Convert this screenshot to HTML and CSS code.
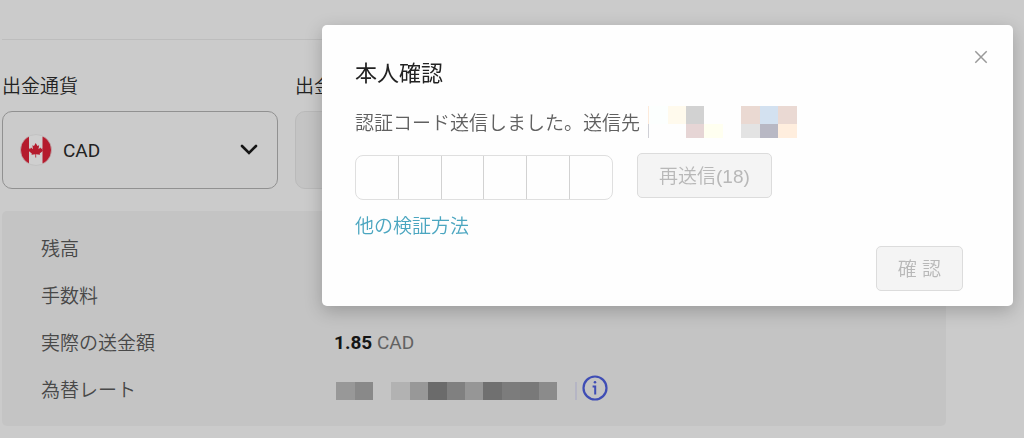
FILE: index.html
```html
<!DOCTYPE html>
<html lang="ja">
<head>
<meta charset="utf-8">
<meta name="viewport" content="width=device-width, initial-scale=1">
<title>本人確認</title>
<link rel="stylesheet" href="styles.css">
</head>
<body>
<main class="page">
  <form class="fields">
    <div class="field">
      <label class="field-label" for="currency">出金通貨</label>
      <div class="select-box">
        <svg class="flag" viewBox="0 0 32 32" aria-hidden="true">
          <defs><clipPath id="disc"><circle cx="16" cy="16" r="15.5"/></clipPath></defs>
          <g clip-path="url(#disc)">
            <path fill="#cfcfcf" d="M0 0h32v32H0z"/>
            <path fill="#b51b2d" d="M0 2.500h9v27H0zM22.500 2.500H32v27h-9.500z"/>
            <path fill="#b51b2d" d="M15.700 9l1.800 3 1.600-.7-.6 4 2-1.700.6 1.100 1.700-.2-.5 1.600.8.600-3.400 2.900.3 1.200-3.900-.5.100 3.200h-.9l.1-3.200-3.900.5.300-1.200-3.400-2.900.8-.6-.5-1.600 1.700.2.600-1.100 2 1.700-.6-4 1.600.7z"/>
          </g>
          <circle cx="16" cy="16" r="15.500" fill="none" stroke="#bdbdbd" stroke-width=".7"/>
        </svg>
        <select id="currency" class="select"><option>CAD</option></select>
        <svg class="chevron" viewBox="0 0 18 12" aria-hidden="true"><path d="M2 2l7 7 7-7"/></svg>
      </div>
    </div>
    <div class="field field-wide">
      <label class="field-label" for="amount">出金額</label>
      <input id="amount" class="amount" type="text" disabled>
    </div>
  </form>
  <dl class="summary">
    <dt>残高</dt><dd></dd>
    <dt>手数料</dt><dd></dd>
    <dt>実際の送金額</dt><dd><strong>1.85</strong> CAD</dd>
    <dt>為替レート</dt>
    <dd class="rate">
      <svg class="rate-mask" viewBox="0 0 242 18" aria-hidden="true">
        <path fill="#989898" d="M0 0h19v18H0z"/><path fill="#898989" d="M19 0h18v18H19z"/>
        <path fill="#b2b2b2" d="M55 0h19v18H55z"/><path fill="#989898" d="M74 0h18v18H74z"/>
        <path fill="#6b6b6b" d="M92 0h19v18H92z"/><path fill="#808080" d="M111 0h18v18h-18z"/>
        <path fill="#969696" d="M129 0h18v18h-18z"/><path fill="#707070" d="M147 0h19v18h-19z"/>
        <path fill="#7c7c7c" d="M166 0h18v18h-18z"/><path fill="#797979" d="M184 0h19v18h-19z"/>
        <path fill="#8b8b8b" d="M203 0h18v18h-18z"/><path fill="#b5b5c4" d="M239 0h2v18h-2z"/>
      </svg>
      <button class="info" type="button" aria-label="為替レートについて">
        <svg viewBox="0 0 26 26" aria-hidden="true">
          <circle cx="13" cy="13" r="11.500" fill="none" stroke="#3f4db5" stroke-width="2.200"/>
          <circle cx="13" cy="7.200" r="1.300" fill="#3f4db5"/>
          <path d="M10.600 11.500h2.600v8" fill="none" stroke="#3f4db5" stroke-width="2"/>
        </svg>
      </button>
    </dd>
  </dl>
</main>

<div class="overlay">
  <section class="dialog" role="dialog" aria-modal="true" aria-labelledby="title">
    <button class="close" type="button" aria-label="閉じる">
      <svg viewBox="0 0 14 14" aria-hidden="true"><path d="M1.300 1.300l11.400 11.400M12.700 1.300L1.300 12.700"/></svg>
    </button>
    <h2 id="title" class="title">本人確認</h2>
    <p class="message"><span>認証コード送信しました。送信先</span>
      <svg class="recipient" viewBox="0 0 149 32" aria-hidden="true">
        <path fill="#fdeadb" d="M0 0h1v18H0z"/><path fill="#d0d0d6" d="M0 18h1v14H0z"/>
        <path fill="#fcfffe" d="M1 0h19v18H1z"/><path fill="#fffaed" d="M20 0h18v18H20z"/>
        <path fill="#d2d2d2" d="M38 0h18v18H38z"/><path fill="#e6d5d5" d="M38 18h18v14H38z"/>
        <path fill="#fffff0" d="M56 18h19v14H56z"/>
        <path fill="#ead9d2" d="M93 0h19v18H93z"/><path fill="#d3e1f0" d="M112 0h18v18h-18z"/>
        <path fill="#ead9d3" d="M130 0h19v18h-19z"/><path fill="#e3e3e3" d="M93 18h19v14H93z"/>
        <path fill="#b8b8c4" d="M112 18h18v14h-18z"/><path fill="#ffeede" d="M130 18h19v14h-19z"/>
      </svg>
    </p>
    <div class="code-row">
      <div class="code" role="group" aria-label="認証コード">
        <input class="digit" type="text" inputmode="numeric" maxlength="1" aria-label="1桁目">
        <input class="digit" type="text" inputmode="numeric" maxlength="1" aria-label="2桁目">
        <input class="digit" type="text" inputmode="numeric" maxlength="1" aria-label="3桁目">
        <input class="digit" type="text" inputmode="numeric" maxlength="1" aria-label="4桁目">
        <input class="digit" type="text" inputmode="numeric" maxlength="1" aria-label="5桁目">
        <input class="digit" type="text" inputmode="numeric" maxlength="1" aria-label="6桁目">
      </div>
      <button class="button" type="button" disabled>再送信(18)</button>
    </div>
    <a class="other" href="#">他の検証方法</a>
    <div class="actions"><button class="button" type="button" disabled>確 認</button></div>
  </section>
</div>
</body>
</html>
```
FILE: styles.css
```css
* { box-sizing: border-box; }

body {
  margin: 0;
  background: #cbcbcb;
  color: #484848;
  font-family: Roboto, "Noto Sans CJK JP", sans-serif;
  font-size: 19px;
  font-weight: 350;
  line-height: 28px;
}

button, input, select { font: inherit; }

.page {
  max-width: 946px;
  padding: 39px 0 12px 2px;
}

.fields {
  display: flex;
  gap: 17px;
  padding-top: 33px;
  border-top: 1px solid #bdbdbd;
}

.field { flex: 0 0 276px; }
.field-wide { flex: 1; }

.field-label {
  display: block;
  margin-bottom: 10px;
  color: #222;
}

.select-box {
  display: flex;
  align-items: center;
  gap: 11px;
  height: 78px;
  padding: 0 19px 0 17px;
  border: 1px solid #919191;
  border-radius: 10px;
}

.flag { width: 32px; height: 32px; flex: none; }

.select {
  flex: 1;
  min-width: 0;
  padding: 2px 0 0;
  border: 0;
  background: none;
  color: #222;
  font-weight: 400;
  appearance: none;
}

.chevron {
  width: 18px;
  height: 12px;
  fill: none;
  stroke: #151515;
  stroke-width: 2.6;
  stroke-linecap: round;
}

.amount {
  display: block;
  width: 100%;
  height: 78px;
  border: 1px solid #bababa;
  border-radius: 10px;
  background: #c4c4c4;
}

.summary {
  display: grid;
  grid-template-columns: 293px 1fr;
  grid-auto-rows: 47px;
  align-items: center;
  margin: 22px 0 0;
  padding: 14px 39px 13px;
  border-radius: 5px;
  background: #c4c4c4;
}

.summary dt { padding-top: 2px; }

.summary dd {
  margin: 0;
  color: #626262;
  font-weight: 400;
}

.summary strong { color: #151515; font-weight: 700; }

.summary .rate {
  display: flex;
  align-items: center;
  padding: 0 0 4px 2px;
}

.rate-mask { width: 242px; height: 18px; margin-top: 6px; }

.info {
  width: 28px;
  height: 28px;
  margin-left: 3px;
  padding: 1px;
  border: 0;
  background: none;
}

.info svg { display: block; width: 26px; height: 26px; }

.overlay {
  position: fixed;
  inset: 0;
  display: flex;
  align-items: flex-start;
  padding: 25px 11px 0 322px;
}

.dialog {
  position: relative;
  flex: 1;
  padding: 35px 50px 15px 33px;
  border-radius: 5px;
  background: #fefefe;
  box-shadow: 0 5px 18px rgba(0, 0, 0, .22);
  color: #606060;
}

.close {
  position: absolute;
  top: 21px;
  right: 21px;
  padding: 4px;
  border: 0;
  background: none;
}

.close svg {
  display: block;
  width: 14px;
  height: 14px;
  fill: none;
  stroke: #999;
  stroke-width: 1.5;
}

.title {
  margin: 0;
  color: #222;
  font-size: 22px;
  font-weight: 400;
  line-height: 28px;
}

.message {
  display: flex;
  align-items: flex-end;
  gap: 8px;
  margin: 18px 0 15px;
}

.recipient { width: 149px; height: 32px; }

.code-row {
  display: flex;
  align-items: flex-start;
  gap: 24px;
}

.code {
  display: flex;
  width: 258px;
  height: 45px;
  margin-top: 2px;
  border: 1px solid #dfdfdf;
  border-radius: 8px;
  overflow: hidden;
}

.digit {
  flex: 1;
  min-width: 0;
  padding: 0;
  border: 0;
  background: none;
  text-align: center;
}

.digit + .digit { border-left: 1px solid #d2d2d2; }

.button {
  height: 45px;
  padding: 2px 21px 0;
  border: 1px solid #dcdcdc;
  border-radius: 5px;
  background: #f4f4f4;
  color: #b8b8b8;
  font-family: "Liberation Sans", "Noto Sans CJK JP", sans-serif;
}

.other {
  display: inline-block;
  margin-top: 13px;
  color: #4ba6c0;
  text-decoration: none;
}

.actions {
  display: flex;
  justify-content: flex-end;
  margin-top: 5px;
}
```
